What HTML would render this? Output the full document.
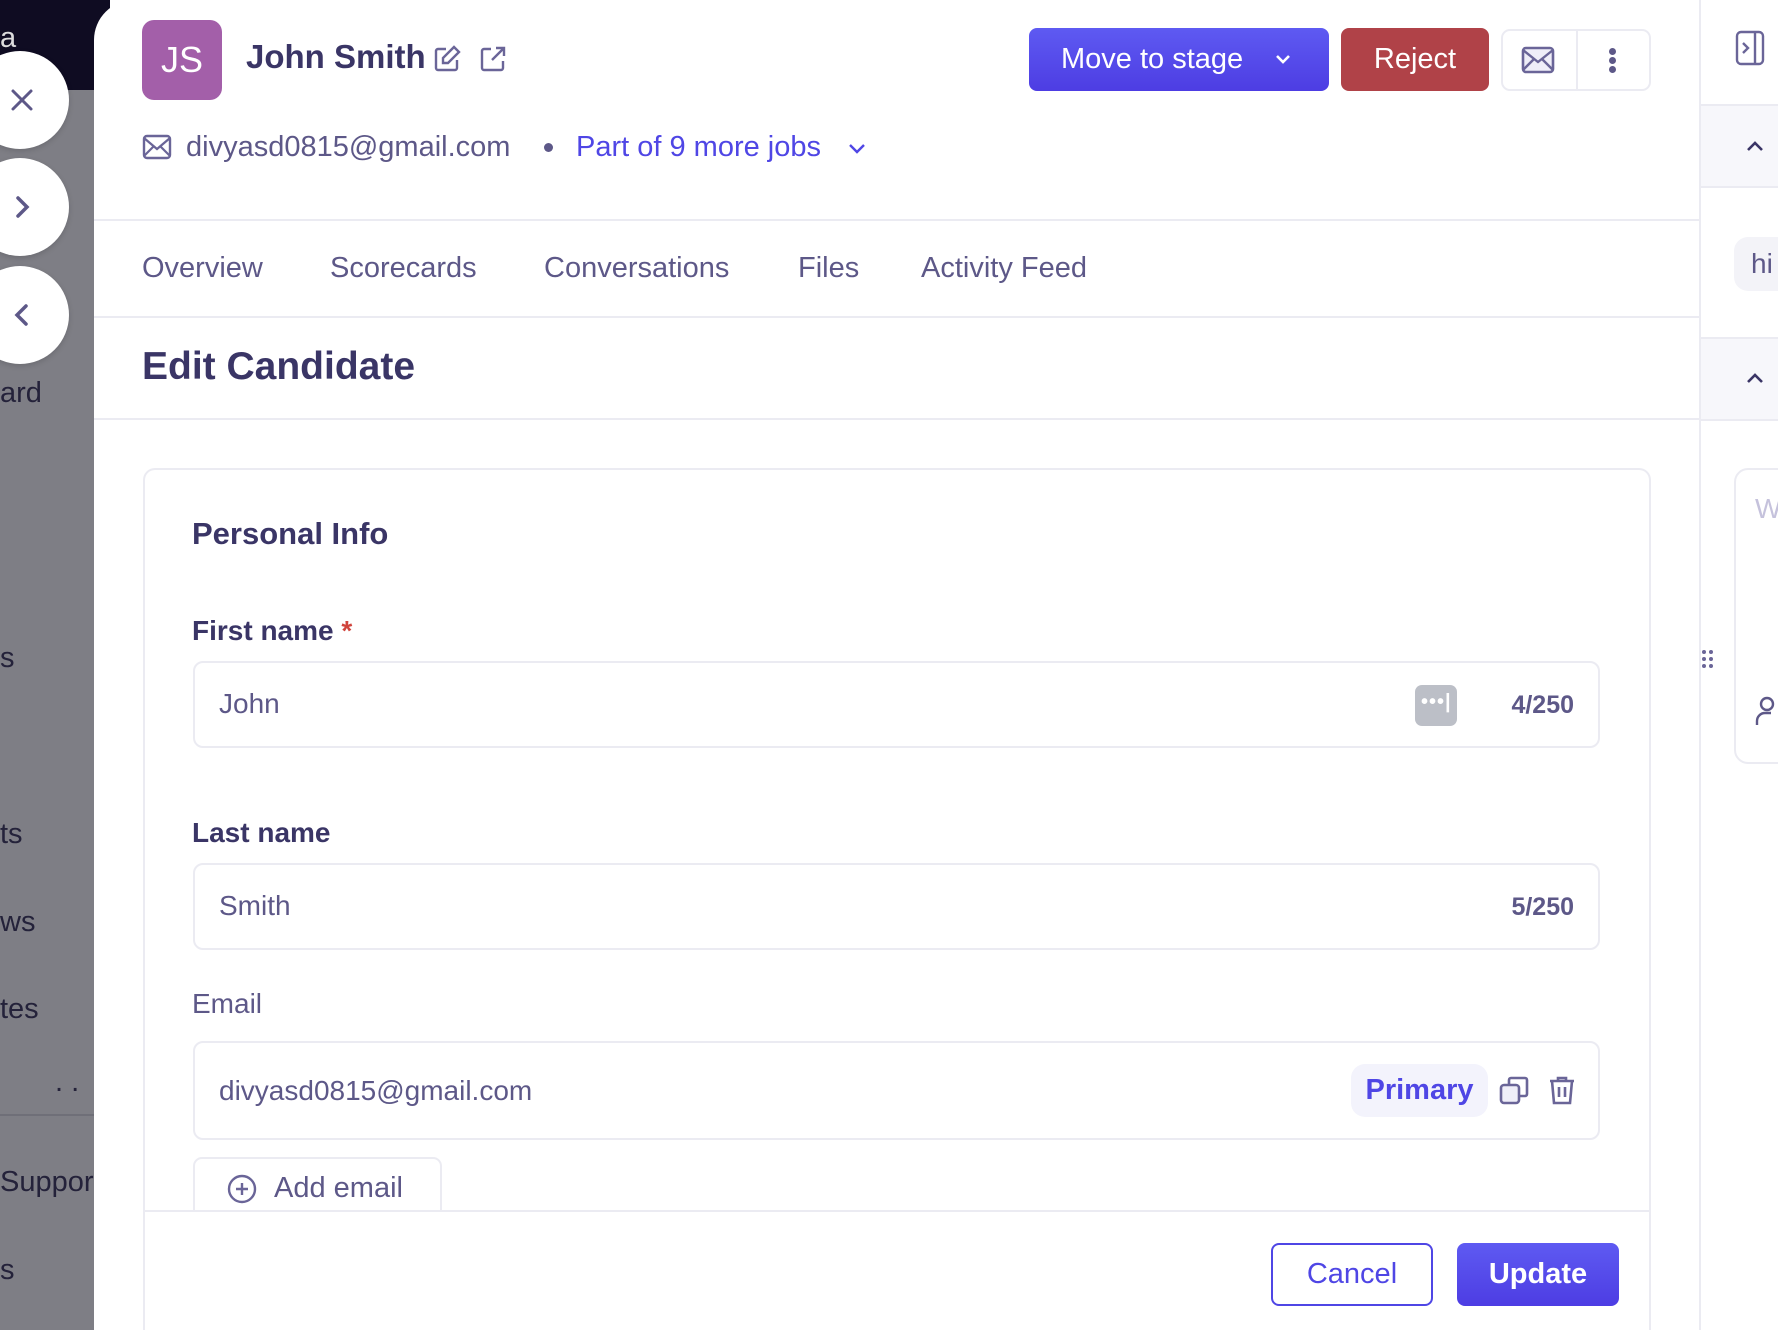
<!DOCTYPE html>
<html style="overflow:hidden;width:1778px;height:1330px"><head><meta charset="utf-8"><style>
*{margin:0;padding:0;box-sizing:border-box}
body{width:1778px;height:1330px;overflow:hidden;background:#fff;font-family:"Liberation Sans",sans-serif;position:relative}
.a{position:absolute}
.side{left:0;top:0;width:110px;height:1330px;background:#7e7e85}
.sidetop{left:0;top:0;width:110px;height:90px;background:#0f0c22}
.st{position:absolute;left:0;color:#24223a;font-size:29px}
.circ{position:absolute;left:-29px;width:98px;height:98px;border-radius:50%;background:#fff;box-shadow:0 2px 6px rgba(0,0,0,.15)}
.main{left:94px;top:0;width:1606px;height:1330px;background:#fff;border-top-left-radius:40px}
.hl{position:absolute;left:94px;width:1606px;height:2px;background:#ebebf2}
.tab{position:absolute;top:252px;font-size:29px;color:#5d5888}
.lbl{position:absolute;left:192px;font-size:28px;color:#3a3566;font-weight:bold}
.inp{position:absolute;left:193px;width:1407px;border:2px solid #ebebf2;border-radius:10px;background:#fff}
.val{position:absolute;left:24px;font-size:28px;color:#5d5888}
.cnt{position:absolute;right:24px;font-size:25px;color:#5d5888;font-weight:bold}
</style></head><body>
<div class="a side"></div>
<div class="a sidetop"></div>
<div class="st" style="top:22px;color:#ddd">a</div>
<div class="st" style="top:156px">s</div>
<div class="st" style="top:377px">ard</div>
<div class="st" style="top:642px">s</div>
<div class="st" style="top:818px">ts</div>
<div class="st" style="top:906px">ws</div>
<div class="st" style="top:993px">tes</div>
<div class="st" style="top:1066px;left:55px">. .</div>
<div class="a" style="left:0;top:1114px;width:94px;height:2px;background:#6f6f78"></div>
<div class="st" style="top:1166px">Suppor</div>
<div class="st" style="top:1254px">s</div>

<div class="a main"></div>
<div class="circ" style="top:51px"></div>
<div class="circ" style="top:158px"></div>
<div class="circ" style="top:266px"></div>
<svg class="a" style="left:8px;top:86px" width="28" height="28" viewBox="0 0 28 28"><path d="M5 5L23 23M23 5L5 23" stroke="#5d5888" stroke-width="3" stroke-linecap="round"/></svg>
<svg class="a" style="left:8px;top:193px" width="28" height="28" viewBox="0 0 28 28"><path d="M10 5L19 14L10 23" stroke="#5d5888" stroke-width="3.5" fill="none" stroke-linecap="round"/></svg>
<svg class="a" style="left:8px;top:301px" width="28" height="28" viewBox="0 0 28 28"><path d="M18 5L9 14L18 23" stroke="#5d5888" stroke-width="3.5" fill="none" stroke-linecap="round"/></svg>

<div class="a" style="left:142px;top:20px;width:80px;height:80px;border-radius:12px;background:#a35fa9;color:#fff;font-size:36px;text-align:center;line-height:80px">JS</div>
<div class="a" style="left:246px;top:38px;font-size:33px;font-weight:bold;color:#3a3566">John Smith</div>
<svg class="a" style="left:432px;top:44px" width="30" height="30" viewBox="0 0 30 30"><path d="M14 5H6a2 2 0 0 0-2 2v17a2 2 0 0 0 2 2h17a2 2 0 0 0 2-2v-8" stroke="#6a6598" stroke-width="2.4" fill="none"/><path d="M22 3l5 5-11 11h-5v-5z" stroke="#6a6598" stroke-width="2.4" fill="none"/></svg>
<svg class="a" style="left:478px;top:44px" width="30" height="30" viewBox="0 0 30 30"><path d="M13 5H6a2 2 0 0 0-2 2v17a2 2 0 0 0 2 2h17a2 2 0 0 0 2-2v-7M18 4h8v8M26 4L14 16" stroke="#6a6598" stroke-width="2.4" fill="none"/></svg>
<svg class="a" style="left:142px;top:134px" width="30" height="26" viewBox="0 0 30 26"><rect x="2" y="2" width="26" height="22" rx="3" stroke="#6a6598" stroke-width="2.4" fill="none"/><path d="M2 4L15 15L28 4M2 22L11 13M28 22L19 13" stroke="#6a6598" stroke-width="2.2" fill="none"/></svg>
<div class="a" style="left:186px;top:131px;font-size:29px;color:#5d5888">divyasd0815@gmail.com</div>
<div class="a" style="left:544px;top:143px;width:9px;height:9px;border-radius:50%;background:#5d5888"></div>
<div class="a" style="left:576px;top:131px;font-size:29px;color:#4f46e5">Part of 9 more jobs</div>
<svg class="a" style="left:846px;top:139px" width="22" height="18" viewBox="0 0 22 18"><path d="M4 6l7 7 7-7" stroke="#4f46e5" stroke-width="2.4" fill="none"/></svg>

<div class="a" style="left:1029px;top:28px;width:300px;height:63px;border-radius:8px;background:linear-gradient(#5e5af2,#4d3de3);color:#fff;font-size:29px;line-height:63px;padding-left:32px">Move to stage</div>
<svg class="a" style="left:1272px;top:49px" width="22" height="20" viewBox="0 0 22 20"><path d="M5 7l6 6 6-6" stroke="#fff" stroke-width="2.6" fill="none"/></svg>
<div class="a" style="left:1341px;top:28px;width:148px;height:63px;border-radius:8px;background:#b04248;color:#fff;font-size:29px;line-height:63px;text-align:center">Reject</div>
<div class="a" style="left:1501px;top:29px;width:150px;height:62px;border:2px solid #ebebf2;border-radius:9px"></div>
<div class="a" style="left:1576px;top:30px;width:2px;height:60px;background:#ebebf2"></div>
<svg class="a" style="left:1521px;top:45px" width="34" height="30" viewBox="0 0 34 30"><rect x="2" y="3" width="30" height="24" rx="3" stroke="#6a6598" stroke-width="2.6" fill="#efeef8"/><path d="M2 5L17 17L32 5M2 25L13 14M32 25L21 14" stroke="#6a6598" stroke-width="2.4" fill="none"/></svg>
<div class="a" style="left:1609px;top:48px;width:7px;height:7px;border-radius:50%;background:#5d5888"></div>
<div class="a" style="left:1609px;top:57px;width:7px;height:7px;border-radius:50%;background:#5d5888"></div>
<div class="a" style="left:1609px;top:66px;width:7px;height:7px;border-radius:50%;background:#5d5888"></div>

<div class="hl" style="top:219px"></div>
<div class="tab" style="left:142px">Overview</div>
<div class="tab" style="left:330px">Scorecards</div>
<div class="tab" style="left:544px">Conversations</div>
<div class="tab" style="left:798px">Files</div>
<div class="tab" style="left:921px">Activity Feed</div>
<div class="hl" style="top:316px"></div>
<div class="a" style="left:142px;top:345px;font-size:39px;font-weight:bold;color:#3a3566">Edit Candidate</div>
<div class="hl" style="top:418px"></div>

<div class="a" style="left:143px;top:468px;width:1508px;height:862px;border:2px solid #ebebf2;border-bottom:none;border-radius:12px 12px 0 0"></div>
<div class="a" style="left:192px;top:516px;font-size:31px;font-weight:bold;color:#3a3566">Personal Info</div>
<div class="lbl" style="top:615px">First name <span style="color:#d0443c">*</span></div>
<div class="inp" style="top:661px;height:87px"><div class="val" style="top:25px">John</div>
<div class="a" style="left:1220px;top:22px;width:42px;height:41px;border-radius:7px;background:#bcbfc7"></div>
<div class="a" style="left:1226px;top:28px;color:#fff;font-size:20px;font-weight:bold;letter-spacing:1px">•••|</div>
<div class="cnt" style="top:28px">4/250</div></div>
<div class="lbl" style="top:817px">Last name</div>
<div class="inp" style="top:863px;height:87px"><div class="val" style="top:25px">Smith</div><div class="cnt" style="top:28px">5/250</div></div>
<div class="lbl" style="top:988px;font-weight:normal;color:#5d5888">Email</div>
<div class="inp" style="top:1041px;height:99px"><div class="val" style="top:32px">divyasd0815@gmail.com</div>
<div class="a" style="left:1156px;top:21px;width:137px;height:53px;border-radius:14px;background:#f3f3fc;color:#4f46e5;font-size:29px;line-height:53px;text-align:center;font-weight:bold">Primary</div>
<svg class="a" style="left:1304px;top:32px" width="32" height="32" viewBox="0 0 32 32"><rect x="2" y="10" width="18" height="18" rx="3" stroke="#6a6598" stroke-width="2.6" fill="#efeef8"/><path d="M10 10V5a2 2 0 0 1 2-2h14a2 2 0 0 1 2 2v14a2 2 0 0 1-2 2h-6" stroke="#6a6598" stroke-width="2.6" fill="none"/></svg>
<svg class="a" style="left:1352px;top:32px" width="30" height="32" viewBox="0 0 30 32"><path d="M3 6h24M11 6V3h8v3M5 6l2 22h16l2-22M12 12v10M18 12v10" stroke="#6a6598" stroke-width="2.6" fill="none"/></svg>
</div>
<div class="a" style="left:193px;top:1157px;width:249px;height:70px;border:2px solid #ebebf2;border-radius:9px"></div>
<svg class="a" style="left:226px;top:1173px" width="32" height="32" viewBox="0 0 32 32"><circle cx="16" cy="16" r="13" stroke="#6a6598" stroke-width="2.4" fill="none"/><path d="M16 10v12M10 16h12" stroke="#6a6598" stroke-width="2.4"/></svg>
<div class="a" style="left:274px;top:1172px;font-size:29px;color:#5d5888">Add email</div>
<div class="a" style="left:145px;top:1210px;width:1504px;height:120px;background:#fff;border-top:2px solid #ebebf2"></div>
<div class="a" style="left:1271px;top:1243px;width:162px;height:63px;border:2px solid #4f46e5;border-radius:8px;color:#4f46e5;font-size:29px;line-height:59px;text-align:center">Cancel</div>
<div class="a" style="left:1457px;top:1243px;width:162px;height:63px;border-radius:8px;background:linear-gradient(#5e5af2,#4d3de3);color:#fff;font-size:29px;line-height:63px;text-align:center;font-weight:bold">Update</div>

<div class="a" style="left:1699px;top:0;width:2px;height:1330px;background:#ebebf2"></div>
<svg class="a" style="left:1735px;top:30px" width="32" height="36" viewBox="0 0 32 36"><rect x="2" y="2" width="26" height="32" rx="4" stroke="#6a6598" stroke-width="2.4" fill="none"/><path d="M20 2v32M8 13l5 5-5 5" stroke="#6a6598" stroke-width="2.4" fill="none"/></svg>
<div class="a" style="left:1701px;top:104px;width:77px;height:84px;background:#f7f7fb;border-top:2px solid #ebebf2;border-bottom:2px solid #ebebf2"></div>
<svg class="a" style="left:1744px;top:137px" width="22" height="18" viewBox="0 0 22 18"><path d="M4 13l7-7 7 7" stroke="#3a3566" stroke-width="2.6" fill="none"/></svg>
<div class="a" style="left:1734px;top:237px;width:60px;height:54px;border-radius:14px;background:#f3f3f8;color:#5d5888;font-size:28px;line-height:54px;padding-left:17px">hi</div>
<div class="a" style="left:1701px;top:337px;width:77px;height:84px;background:#f7f7fb;border-top:2px solid #ebebf2;border-bottom:2px solid #ebebf2"></div>
<svg class="a" style="left:1744px;top:369px" width="22" height="18" viewBox="0 0 22 18"><path d="M4 13l7-7 7 7" stroke="#3a3566" stroke-width="2.6" fill="none"/></svg>
<div class="a" style="left:1734px;top:468px;width:80px;height:296px;border:2px solid #ebebf2;border-radius:14px"></div>
<div class="a" style="left:1755px;top:493px;font-size:28px;color:#c5c2dc">W</div>
<svg class="a" style="left:1700px;top:648px" width="16" height="26" viewBox="0 0 16 26"><g fill="#6a6598"><circle cx="4" cy="4" r="2"/><circle cx="11" cy="4" r="2"/><circle cx="4" cy="11" r="2"/><circle cx="11" cy="11" r="2"/><circle cx="4" cy="18" r="2"/><circle cx="11" cy="18" r="2"/></g></svg>
<svg class="a" style="left:1755px;top:695px" width="23" height="32" viewBox="0 0 23 32"><circle cx="12" cy="9" r="6" stroke="#5d5888" stroke-width="2.4" fill="none"/><path d="M2 30v-4a8 8 0 0 1 8-8h6" stroke="#5d5888" stroke-width="2.4" fill="none"/></svg>
</body></html>
